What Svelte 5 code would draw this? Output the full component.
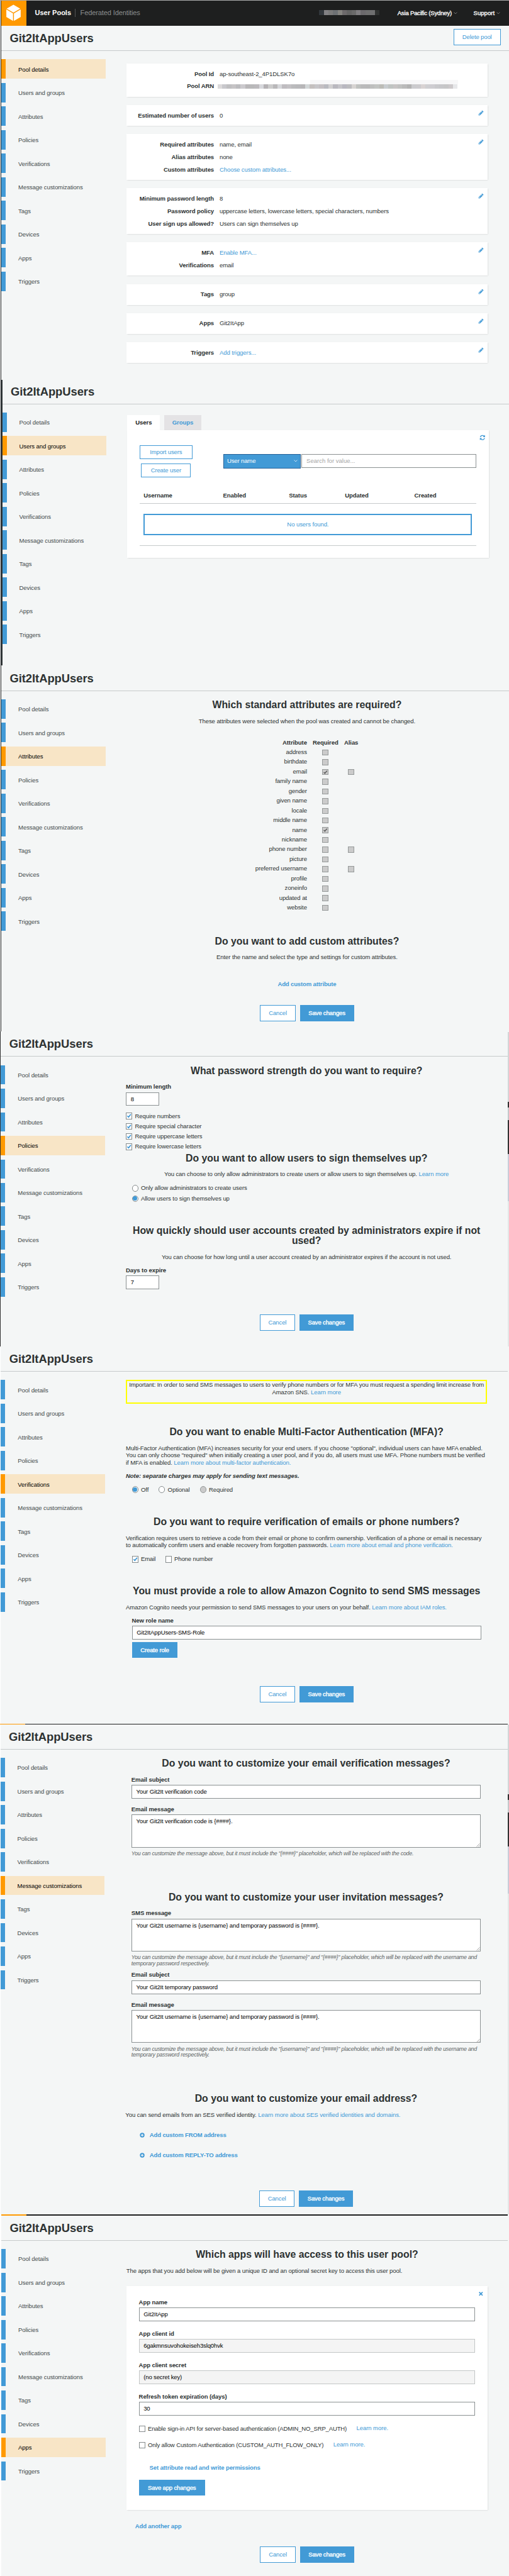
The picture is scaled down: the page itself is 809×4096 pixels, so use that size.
<script>
  const items = ['Pool details', 'Users and groups', 'Attributes', 'Policies', 'Verifications', 'Message customizations', 'Tags', 'Devices', 'Apps', 'Triggers'];

  const cards = [
    { edit: false, rows: [['Pool Id', 'ap-southeast-2_4P1DLSK7o'], ['Pool ARN', null]] },
    { edit: true, rows: [['Estimated number of users', '0']] },
    { edit: true, rows: [['Required attributes', 'name, email'], ['Alias attributes', 'none'], ['Custom attributes', 'Choose custom attributes...', true]] },
    { edit: true, rows: [['Minimum password length', '8'], ['Password policy', 'uppercase letters, lowercase letters, special characters, numbers'], ['User sign ups allowed?', 'Users can sign themselves up']] },
    { edit: true, rows: [['MFA', 'Enable MFA...', true], ['Verifications', 'email']] },
    { edit: true, rows: [['Tags', 'group']] },
    { edit: true, rows: [['Apps', 'Git2ItApp']] },
    { edit: true, rows: [['Triggers', 'Add triggers...', true]] }
  ];

  const attributes = [
    ['address'], ['birthdate'], ['email', true, true], ['family name'], ['gender'], ['given name'], ['locale'], ['middle name'],
    ['name', true], ['nickname'], ['phone number', false, true], ['picture'], ['preferred username', false, true],
    ['profile'], ['zoneinfo'], ['updated at'], ['website']
  ];

  const accountCells = ['#32373c', '#828184', '#7a7a7a', '#6e7174', '#858480', '#6d6a6c', '#636363', '#6a6a6a', '#7f7d80', '#6b696c', '#6e6e6e', '#6f6f70', '#2f3130'];
  const arnCells = ['#dcdadb', '#c8c8cc', '#bfbfc1', '#c6c4c6', '#bcbcbf', '#cbc9cd', '#b9b7b9', '#b9b9ba', '#bcbabd', '#d7d8dc', '#b5b2b5', '#cccccc', '#b9b8ba', '#d6d7da', '#bfbcc0', '#c3c1c4', '#bbbbbd', '#b9b9bb', '#b7b6b8', '#d2d6d7', '#c4c0bf', '#c7c6c9', '#c4c0c3', '#b9bac0', '#d1d0d1', '#b9b8bf', '#c5c4c9', '#b8b7c0', '#bcbcbf', '#d7d4d2', '#c0c2c0', '#bababb', '#b9b9ba', '#bebfbe', '#c2c4c2', '#bcbcb7', '#c8cccf', '#c0c4c2', '#c7c4c4', '#c0c1c0', '#bababa', '#b2b2b2', '#cbcbce', '#cccbce', '#d9d3d3', '#cfcfd2', '#cecdd1', '#c9c9cc', '#c7c7ca', '#c6c6c7', '#cdc9cb', '#e7e8ea'];
</script>

{#snippet title()}
  <header class="head"><h1>Git2ItAppUsers</h1></header>
{/snippet}

{#snippet nav(active)}
  <nav class="nav">
    {#each items as item}
      <a class="item" class:active={item === active}>{item}</a>
    {/each}
  </nav>
{/snippet}

{#snippet check(on, off)}
  <span class="box" class:off>
    {#if on}<svg viewBox="0 0 12 12"><path d="M2 6.2 L4.8 9 L10 2.6" fill="none" stroke={off ? '#555' : '#3591d2'} stroke-width="2.3" /></svg>{/if}
  </span>
{/snippet}

{#snippet radio(on, off)}
  <span class="radio" class:off>{#if on}<i></i>{/if}</span>
{/snippet}

{#snippet pencil()}
  <svg class="corner" viewBox="0 0 1792 1792"><path fill="#429ad6" d="M491 1536l91-91-235-235-91 91v107h128v128h107zm523-928q0-22-22-22-10 0-17 7l-542 542q-7 7-7 17 0 22 22 22 10 0 17-7l542-542q7-7 7-17zm-54-192l416 416-832 832h-416v-416zm683 96q0 53-37 90l-166 166-416-416 166-165q36-38 90-38 53 0 91 38l235 234q37 39 37 91z" /></svg>
{/snippet}

{#snippet plus()}
  <svg class="plus" viewBox="0 0 12 12"><circle cx="6" cy="6" r="5.5" fill="#429ad6" /><path d="M6 3v6M3 6h6" stroke="#f4f6f6" stroke-width="1.9" /></svg>
{/snippet}

{#snippet grip()}
  <svg class="grip" viewBox="0 0 8 8"><path d="M0.5 7.5L7.5 0.5M4.5 7.5L7.5 4.5" stroke="#777" stroke-width="0.9" /></svg>
{/snippet}

{#snippet actions()}
  <div class="actions"><span class="btn cancel">Cancel</span><span class="btn solid save">Save changes</span></div>
{/snippet}

<div class="page">
  <section class="s1">
    <div class="topbar">
      <div class="logo">
        <svg viewBox="0 0 54 54"><g fill="#fff"><path d="M26.3 9L41 17.4 26.3 25.8 11.6 17.4z" /><path d="M11 19.2L25.4 27.6V43.8L11 35.4z" /><path d="M42 19.2L27.4 27.6V43.8L42 35.4z" /></g></svg>
      </div>
      <span class="brand">User Pools</span>
      <span class="fed">Federated Identities</span>
      <span class="account">{#each accountCells as c}<i style:background={c}></i>{/each}</span>
      <span class="menu region">Asia Pacific (Sydney)</span>
      <svg class="chev" viewBox="0 0 8 5"><path d="M.7.7L4 4 7.3.7" fill="none" stroke="#999" /></svg>
      <span class="menu support">Support</span>
      <svg class="chev" viewBox="0 0 8 5"><path d="M.7.7L4 4 7.3.7" fill="none" stroke="#999" /></svg>
    </div>
    <header class="head"><h1>Git2ItAppUsers</h1><span class="btn delete">Delete pool</span></header>
    <div class="body">
      {@render nav('Pool details')}
      <main class="cards">
        {#each cards as card}
          <div class="card">
            {#each card.rows as row}
              <div class="row">
                <b>{row[0]}</b>
                {#if row[1] === null}
                  <span class="arn">
                    <span class="faint"></span>
                    {#each arnCells as c}<i style:background={c}></i>{/each}
                  </span>
                {:else}
                  <span class:link={row[2]}>{row[1]}</span>
                {/if}
              </div>
            {/each}
            {#if card.edit}{@render pencil()}{/if}
          </div>
        {/each}
      </main>
    </div>
  </section>

  <section class="s2">
    {@render title()}
    <div class="body">
      {@render nav('Users and groups')}
      <main>
        <div class="tabs"><span class="tab on">Users</span><span class="tab">Groups</span></div>
        <div class="panel users">
          <svg class="corner refresh" viewBox="0 0 1792 1792"><path fill="#429ad6" d="M1639 1056q0 5-1 7-64 268-268 434.500t-478 166.500q-146 0-282.500-55t-243.500-157l-129 129q-19 19-45 19t-45-19-19-45v-448q0-26 19-45t45-19h448q26 0 45 19t19 45-19 45l-137 137q71 66 161 102t187 36q134 0 250-65t186-179q11-17 53-117 8-23 30-23h192q13 0 22.500 9.500t9.500 22.500zm25-800v448q0 26-19 45t-45 19h-448q-26 0-45-19t-19-45 19-45l138-138q-148-137-349-137-134 0-250 65t-186 179q-11 17-53 117-8 23-30 23h-199q-13 0-22.500-9.500t-9.500-22.500v-7q65-268 270-434.500t480-166.500q146 0 284 55.500t245 156.500l130-129q19-19 45-19t45 19 19 45z" /></svg>
          <div class="tools">
            <div class="stack"><span class="btn import">Import users</span><span class="btn create">Create user</span></div>
            <div class="select">User name<svg class="chev" viewBox="0 0 8 5"><path d="M.7.7L4 4 7.3.7" fill="none" stroke="#fff" /></svg></div>
            <div class="input search">Search for value...</div>
          </div>
          <div class="thead"><b>Username</b><b>Enabled</b><b>Status</b><b>Updated</b><b>Created</b></div>
          <div class="empty">No users found.</div>
          <div class="rule"></div>
        </div>
      </main>
    </div>
  </section>

  <section class="s3">
    {@render title()}
    <div class="body">
      {@render nav('Attributes')}
      <main>
        <h2>Which standard attributes are required?</h2>
        <p class="mid">These attributes were selected when the pool was created and cannot be changed.</p>
        <div class="grid">
          <div class="attr"><b>Attribute</b><b class="c">Required</b><b class="c">Alias</b></div>
          {#each attributes as [name, on, alias]}
            <div class="attr">
              <span>{name}</span>
              <span class="c">{@render check(on, true)}</span>
              <span class="c">{#if alias}{@render check(false, true)}{/if}</span>
            </div>
          {/each}
        </div>
        <h2 class="custom">Do you want to add custom attributes?</h2>
        <p class="mid">Enter the name and select the type and settings for custom attributes.</p>
        <b class="blink addattr">Add custom attribute</b>
        {@render actions()}
      </main>
    </div>
  </section>

  <section class="s4">
    {@render title()}
    <div class="body">
      {@render nav('Policies')}
      <main>
        <h2>What password strength do you want to require?</h2>
        <b class="label">Minimum length</b>
        <div class="input tiny">8</div>
        <div class="checks">
          {#each ['Require numbers', 'Require special character', 'Require uppercase letters', 'Require lowercase letters'] as c}
            <div class="opt">{@render check(true, false)}{c}</div>
          {/each}
        </div>
        <h2 class="signup">Do you want to allow users to sign themselves up?</h2>
        <p class="mid">You can choose to only allow administrators to create users or allow users to sign themselves up. <a>Learn more</a></p>
        <div class="radios">
          <div class="opt">{@render radio(false, false)}Only allow administrators to create users</div>
          <div class="opt">{@render radio(true, false)}Allow users to sign themselves up</div>
        </div>
        <h2 class="expire">How quickly should user accounts created by administrators expire if not<br />used?</h2>
        <p class="mid">You can choose for how long until a user account created by an administrator expires if the account is not used.</p>
        <b class="label days">Days to expire</b>
        <div class="input tiny">7</div>
        {@render actions()}
      </main>
    </div>
  </section>

  <section class="s5">
    {@render title()}
    <div class="body">
      {@render nav('Verifications')}
      <main>
        <div class="warn">Important: In order to send SMS messages to users to verify phone numbers or for MFA you must request a spending limit increase from<br />Amazon SNS. <a>Learn more</a></div>
        <h2 class="mfa">Do you want to enable Multi-Factor Authentication (MFA)?</h2>
        <p>Multi-Factor Authentication (MFA) increases security for your end users. If you choose "optional", individual users can have MFA enabled.<br />You can only choose "required" when initially creating a user pool, and if you do, all users must use MFA. Phone numbers must be verified<br />if MFA is enabled. <a>Learn more about multi-factor authentication.</a></p>
        <b class="note">Note: separate charges may apply for sending text messages.</b>
        <div class="line">
          <div class="opt off1">{@render radio(true, false)}Off</div>
          <div class="opt opt2">{@render radio(false, false)}Optional</div>
          <div class="opt">{@render radio(false, true)}Required</div>
        </div>
        <h2 class="verify">Do you want to require verification of emails or phone numbers?</h2>
        <p>Verification requires users to retrieve a code from their email or phone to confirm ownership. Verification of a phone or email is necessary<br />to automatically confirm users and enable recovery from forgotten passwords. <a>Learn more about email and phone verification.</a></p>
        <div class="line line2">
          <div class="opt mail">{@render check(true, false)}Email</div>
          <div class="opt">{@render check(false, false)}Phone number</div>
        </div>
        <h2 class="role">You must provide a role to allow Amazon Cognito to send SMS messages</h2>
        <p>Amazon Cognito needs your permission to send SMS messages to your users on your behalf. <a>Learn more about IAM roles.</a></p>
        <div class="inset">
          <b class="label rolename">New role name</b>
          <div class="input">Git2ItAppUsers-SMS-Role</div>
          <span class="btn solid createrole">Create role</span>
        </div>
        {@render actions()}
      </main>
    </div>
  </section>

  <section class="s6">
    <div class="strip"></div>
    {@render title()}
    <div class="body">
      {@render nav('Message customizations')}
      <main>
        <h2>Do you want to customize your email verification messages?</h2>
        <div class="inset">
          <b class="label">Email subject</b>
          <div class="input">Your Git2It verification code</div>
          <b class="label">Email message</b>
          <div class="input area">Your Git2It verification code is {'{####}'}.{@render grip()}</div>
          <em>You can customize the message above, but it must include the "{'{####}'}" placeholder, which will be replaced with the code.</em>
        </div>
        <h2 class="invite">Do you want to customize your user invitation messages?</h2>
        <div class="inset">
          <b class="label">SMS message</b>
          <div class="input area">Your Git2It username is {'{username}'} and temporary password is {'{####}'}.{@render grip()}</div>
          <em>You can customize the message above, but it must include the "{'{username}'}" and "{'{####}'}" placeholder, which will be replaced with the username and<br />temporary password respectively.</em>
          <b class="label close">Email subject</b>
          <div class="input">Your Git2It temporary password</div>
          <b class="label">Email message</b>
          <div class="input area">Your Git2It username is {'{username}'} and temporary password is {'{####}'}.{@render grip()}</div>
          <em>You can customize the message above, but it must include the "{'{username}'}" and "{'{####}'}" placeholder, which will be replaced with the username and<br />temporary password respectively.</em>
        </div>
        <h2 class="invite">Do you want to customize your email address?</h2>
        <p>You can send emails from an SES verified identity. <a>Learn more about SES verified identities and domains.</a></p>
        <b class="blink add">{@render plus()}Add custom FROM address</b>
        <b class="blink add">{@render plus()}Add custom REPLY-TO address</b>
        {@render actions()}
      </main>
    </div>
  </section>

  <section class="s7">
    <div class="strip"></div>
    {@render title()}
    <div class="body">
      {@render nav('Apps')}
      <main>
        <h2>Which apps will have access to this user pool?</h2>
        <p>The apps that you add below will be given a unique ID and an optional secret key to access this user pool.</p>
        <div class="panel app">
          <svg class="corner cross" viewBox="0 0 10 10"><path d="M1 1l8 8M9 1l-8 8" stroke="#429ad6" stroke-width="2.6" /></svg>
          <b class="label">App name</b>
          <div class="input">Git2ItApp</div>
          <b class="label">App client id</b>
          <div class="input locked">6gakmnsuvohokeiseh3slq0hvk</div>
          <b class="label">App client secret</b>
          <div class="input locked">(no secret key)</div>
          <b class="label">Refresh token expiration (days)</b>
          <div class="input">30</div>
          <div class="opt api">{@render check(false, false)}Enable sign-in API for server-based authentication (ADMIN_NO_SRP_AUTH)<a>Learn more.</a></div>
          <div class="opt flow">{@render check(false, false)}Only allow Custom Authentication (CUSTOM_AUTH_FLOW_ONLY)<a>Learn more.</a></div>
          <b class="blink perms">Set attribute read and write permissions</b>
          <span class="btn solid saveapp">Save app changes</span>
        </div>
        <b class="blink another">Add another app</b>
        {@render actions()}
      </main>
    </div>
  </section>
</div>

<style>
  :global(body) { background: #f4f6f6; overflow: hidden; }
  .page { zoom: 0.7354; width: 1100px; height: 5571px; overflow: hidden; font: 13px/16px "Liberation Sans", Arial, sans-serif; letter-spacing: -0.12px; color: #2d3232; background: #f4f6f6; }
  section { position: relative; display: flex; flex-direction: column; box-sizing: border-box; white-space: nowrap; }
  .s1 { height: 822px; padding-left: 3px; border-top: 1px solid #aaa; background: linear-gradient(90deg, #f4f6f6 1.6px, #222 1.6px, #222 3px, transparent 3px); }
  .s2 { height: 617px; padding-left: 5px; background: linear-gradient(90deg, #ddd 1px, #2f3436 1px, #2f3436 5px, transparent 5px); }
  .s3 { height: 791px; padding-left: 3px; background: linear-gradient(90deg, #f4f6f6 1.6px, #222 1.6px, #222 3px, transparent 3px); }
  .s4 { height: 681px; padding-left: 2px; background: linear-gradient(90deg, #333 2px, transparent 2px); }
  .s5 { height: 816px; padding-left: 2px; background: linear-gradient(90deg, #fff 2px, transparent 2px); }
  .s6 { height: 1061px; padding-left: 1px; background: linear-gradient(90deg, #fff 1px, transparent 1px); }
  .s7 { height: 783px; padding-left: 3px; background: linear-gradient(90deg, #fff 3px, transparent 3px); }
  .s4::after, .s6::after { content: ""; position: absolute; right: 0; top: 2px; bottom: 0; width: 2px; background: linear-gradient(#d2d5d6 151px, #333 151px, #333 163px, #c4c8ca 163px, #c4c8ca 190px, #333 190px, #333 264px, #c9cdd8 264px, #c9cdd8 366px, #e4e7e7 366px); }
  .strip { position: absolute; left: 0; top: 0; width: 1098px; height: 2px; background: linear-gradient(90deg, #ff9900 54px, #1e1f1f 54px); }
  .s7 .strip { left: 3px; width: 1095px; }

  .topbar { display: flex; align-items: center; height: 54px; background: #1e1f1f; color: #fff; }
  .logo { width: 54px; height: 54px; background: #ff9900; }
  .logo svg { display: block; width: 54px; height: 54px; }
  .brand { margin-left: 18.5px; width: 87.5px; line-height: 18px; border-right: 1px solid #555; box-sizing: border-box; font-weight: bold; font-size: 15px; letter-spacing: 0; }
  .fed { margin-left: 10.5px; width: 516.5px; font-size: 15px; letter-spacing: -0.15px; color: #8b8e8f; }
  .account { display: flex; width: 169px; }
  .account i { width: 10px; height: 10px; margin-top: -2px; }
  .menu { letter-spacing: -0.25px; -webkit-text-stroke: 0.45px #fff; }
  .region { width: 121px; }
  .support { margin-left: 35.5px; width: 49.5px; letter-spacing: 0; }
  .chev { width: 8px; height: 5px; }

  .head { display: flex; justify-content: space-between; align-items: flex-end; box-sizing: border-box; border-bottom: 1px solid #c6cacb; padding: 0 18px 11px 18px; margin: 0; }
  .s1 .head { height: 55px; }
  .s2 .head { height: 52px; }
  .s3 .head, .s4 .head, .s5 .head { height: 55px; }
  .s6 .head { height: 56px; }
  .s7 .head { height: 57px; }
  .s4 .head, .s5 .head, .s6 .head, .s7 .head { margin-right: 2px; }
  h1 { margin: 0; font-size: 25px; line-height: 30px; letter-spacing: -0.05px; }
  .delete { width: 102px; height: 35px; }

  .body { display: flex; padding-top: 18px; }
  .nav { display: flex; flex-direction: column; gap: 9px; width: 270px; flex: none; }
  .item { display: flex; align-items: center; width: 225px; height: 42px; box-sizing: border-box; border-left: 10px solid #429ad6; padding: 2px 0 0 27px; }
  main { width: 781px; display: flex; flex-direction: column; }

  .cards { padding-top: 9px; gap: 18px; }
  .card { position: relative; padding: 9px 0; background: #fff; box-shadow: 1px 2px 3px rgba(0, 0, 0, 0.16); }
  .row { display: flex; height: 27px; line-height: 27px; }
  .row b { width: 189.5px; margin-right: 12px; text-align: right; }
  .corner { position: absolute; right: 8.5px; top: 10.5px; width: 12.5px; height: 12.5px; }
  .arn { position: relative; display: flex; align-items: center; margin-left: -4.5px; }
  .arn i { width: 10px; height: 10px; position: relative; }
  .faint { position: absolute; left: 200px; top: 0; width: 320px; height: 9px; background: #f7f7f8; }
  .link, a { color: #429ad6; }
  a.item { color: #444b4c; }
  a.item.active { border-color: #ff9900; background: #f8e5c6; color: #000; }

  h2 { margin: 0; font-size: 21.5px; line-height: 24px; letter-spacing: 0.02px; text-align: center; }
  p { margin: 15px 0 0; line-height: 15.8px; }
  .mid { text-align: center; }
  .btn { display: flex; align-items: center; justify-content: center; box-sizing: border-box; border: 1px solid #429ad6; background: #fff; color: #429ad6; letter-spacing: -0.2px; }
  .solid { background: #429ad6; color: #fff; letter-spacing: -0.22px; -webkit-text-stroke: 0.45px #fff; }
  .actions { display: flex; justify-content: center; gap: 9px; }
  .cancel { width: 77px; height: 35px; }
  .save { width: 117px; height: 35px; }
  .input { position: relative; box-sizing: border-box; height: 30px; line-height: 28px; margin-top: 3.4px; padding-left: 9px; border: 1px solid #8b9192; background: #fff; color: #000; letter-spacing: -0.2px; }
  .area { height: 71.2px; line-height: 28px; }
  .grip { position: absolute; right: 0; bottom: 0; width: 8px; height: 8px; }
  .locked { background: #f4f4f4; border-color: #c3c6c6; }
  .label { display: block; margin-top: 15px; }
  .inset { padding: 0 13px; }
  .opt { display: flex; align-items: center; height: 22.2px; }
  .box { display: block; flex: none; box-sizing: border-box; width: 14px; height: 14px; margin-right: 5.6px; border: 1px solid #868c8d; background: #fff; }
  .box svg { display: block; width: 100%; height: 100%; }
  .radio { display: flex; align-items: center; justify-content: center; flex: none; box-sizing: border-box; width: 14px; height: 14px; margin-right: 5.6px; border: 1px solid #868c8d; border-radius: 50%; background: #fff; }
  .radio i { width: 9px; height: 9px; border-radius: 50%; background: #429ad6; }
  .off { background: #cbcbcb; border-color: #959999; }
  .blink { color: #429ad6; letter-spacing: -0.2px; }
  .panel { position: relative; box-sizing: border-box; background: #fff; box-shadow: 1px 2px 3px rgba(0, 0, 0, 0.16); }

  .tabs { display: flex; gap: 9px; margin-top: 5px; }
  .tab { width: 80px; height: 32.6px; display: flex; align-items: center; justify-content: center; background: #e4e3e5; color: #429ad6; font-weight: bold; }
  .tab.on { width: 71px; background: #fff; color: #222; }
  .users { height: 276.6px; padding: 32.6px 26.5px 0; }
  .refresh { right: 7px; top: 10.5px; width: 13px; height: 13px; }
  .tools { display: flex; }
  .stack { display: flex; flex-direction: column; align-items: center; gap: 9.8px; width: 114.5px; margin-right: 66.5px; }
  .import { width: 114.5px; height: 30px; }
  .create { width: 107px; height: 30px; }
  .select { display: flex; align-items: center; justify-content: space-between; box-sizing: border-box; width: 167.5px; height: 32px; margin-top: 19px; padding: 0 5px 0 7px; border: 1px solid #235f96; background: #429ad6; color: #fff; letter-spacing: -0.2px; }
  .search { flex: 1; height: 31px; margin: 19px 0 0 2px; color: #a5a5a5; letter-spacing: 0; }
  .thead { display: grid; grid-template-columns: 171.5px 142.5px 121px 150px 1fr; margin-top: 31.6px; padding: 0 0 9px 9px; border-bottom: 1px solid #c6cacb; }
  .empty { box-sizing: border-box; height: 46px; line-height: 41px; margin: 21.5px 9px 0; border: 3px solid #429ad6; color: #429ad6; text-align: center; }
  .rule { margin-top: 21px; border-top: 1px solid #c6cacb; }

  .grid { margin-top: 29px; }
  .attr { display: grid; grid-template-columns: 390.5px 80px 31px; align-items: center; height: 21px; text-align: right; }
  .attr > span:first-child { margin-top: -2px; }
  .c { display: flex; justify-content: center; }
  .attr .box { margin: 0; height: 13px; }
  .custom { margin-top: 49.5px; }
  .addattr { margin-top: 42px; text-align: center; }
  .s3 .actions { margin-top: 37px; }

  .tiny { width: 71.5px; height: 29.5px; }
  .checks { margin-top: 11px; }
  .signup { margin-top: 1.4px; }
  .radios { margin-top: 11.4px; padding-left: 13px; }
  .expire { margin-top: 47.2px; line-height: 23px; }
  .days { margin-top: 12px; }
  .s4 .actions { margin-top: 55px; }

  .warn { box-sizing: border-box; height: 51px; border: 3px solid #ffff00; text-align: center; line-height: 15.8px; }
  .mfa { margin-top: 49.2px; }
  .note { margin-top: 13.3px; font-style: italic; }
  .line { display: flex; margin-top: 10px; padding-left: 13px; }
  .off1 { width: 58px; }
  .opt2 { width: 89px; }
  .mail { width: 72px; }
  .verify { margin-top: 46.6px; }
  .line2 { margin-top: 11.2px; }
  .role { margin-top: 45.6px; }
  .rolename { margin-top: 13.2px; }
  .createrole { width: 99px; height: 35px; margin-top: 4.6px; }
  .s5 .actions { margin-top: 60.5px; }

  em { display: block; margin-top: 7px; font-size: 12px; line-height: 13.1px; letter-spacing: -0.28px; color: #5c6263; }
  .invite { margin-top: 75px; }
  .close { margin-top: 9.5px; }
  .add { display: flex; align-items: center; margin-top: 28px; padding-left: 31px; }
  .plus { width: 11px; height: 11px; margin-right: 10.4px; }
  .s6 .actions { margin-top: 68px; }

  .app { height: 484.3px; margin-top: 24.7px; padding: 27.3px 27px 0; }
  .app .label { margin-top: 18.8px; }
  .app .corner + .label { margin-top: 0; }
  .cross { width: 9px; height: 9px; right: 10px; top: 13px; }
  .opt a { margin: -2px 0 0 21px; letter-spacing: -0.12px; }
  .api { margin-top: 17px; letter-spacing: -0.23px; }
  .flow { margin-top: 13.2px; letter-spacing: -0.19px; }
  .perms { display: block; margin: 29px 0 0 23px; }
  .saveapp { width: 143px; height: 35px; margin-top: 18px; }
  .another { margin: 27.7px 0 0 19px; }
  .s7 .actions { margin-top: 36px; }
</style>
